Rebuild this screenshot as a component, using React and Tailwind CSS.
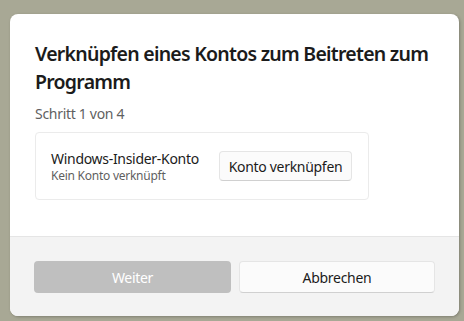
export default function App() {
  const font = { fontFamily: '"Segoe UI", "Noto Sans", "Open Sans", sans-serif' };
  return (
    <div className="w-[464px] h-[321px] bg-[#a8a895] pt-[14px] pl-[10px]" style={font}>
      <div className="w-[449px] h-[302px] bg-white rounded-[8px] overflow-hidden flex flex-col shadow-[1px_1px_3px_rgba(0,0,0,0.25)]">
        <div className="flex-1 pl-[25px] pr-[10px] pt-[26px]">
          <h1 className="text-[19.5px] leading-[28px] font-semibold text-[#1b1b1b] tracking-[-0.75px]">
            Verknüpfen eines Kontos zum Beitreten zum Programm
          </h1>
          <p className="mt-[8px] text-[14px] leading-[20px] text-[#5f5f5f] tracking-[-0.3px]">Schritt 1 von 4</p>
          <div className="mt-[8px] w-[334px] h-[68px] border border-[#ebebeb] rounded-[4px] flex items-center justify-between pl-[15px] pr-[16px]">
            <div className="flex flex-col">
              <span className="text-[14px] leading-[19px] text-[#1b1b1b] tracking-[-0.3px]">Windows-Insider-Konto</span>
              <span className="text-[12px] leading-[16px] text-[#5f5f5f] tracking-[-0.25px]">Kein Konto verknüpft</span>
            </div>
            <button className="w-[133px] h-[30px] rounded-[4px] border border-[#e5e5e5] border-b-[#d0d0d0] bg-[#fbfbfb] text-[14px] text-[#1b1b1b] tracking-[-0.3px]">
              Konto verknüpfen
            </button>
          </div>
        </div>
        <div className="h-[80px] bg-[#f3f3f3] border-t border-[#e5e5e5] flex gap-[8px] px-[24px] pt-[24px]">
          <button className="w-[197px] h-[32px] rounded-[4px] bg-[#bfbfbf] text-white text-[14px] tracking-[-0.3px]">Weiter</button>
          <button className="w-[196px] h-[32px] rounded-[4px] bg-[#fbfbfb] border border-[#e5e5e5] border-b-[#d0d0d0] text-[14px] text-[#1b1b1b] tracking-[-0.3px]">Abbrechen</button>
        </div>
      </div>
    </div>
  );
}
